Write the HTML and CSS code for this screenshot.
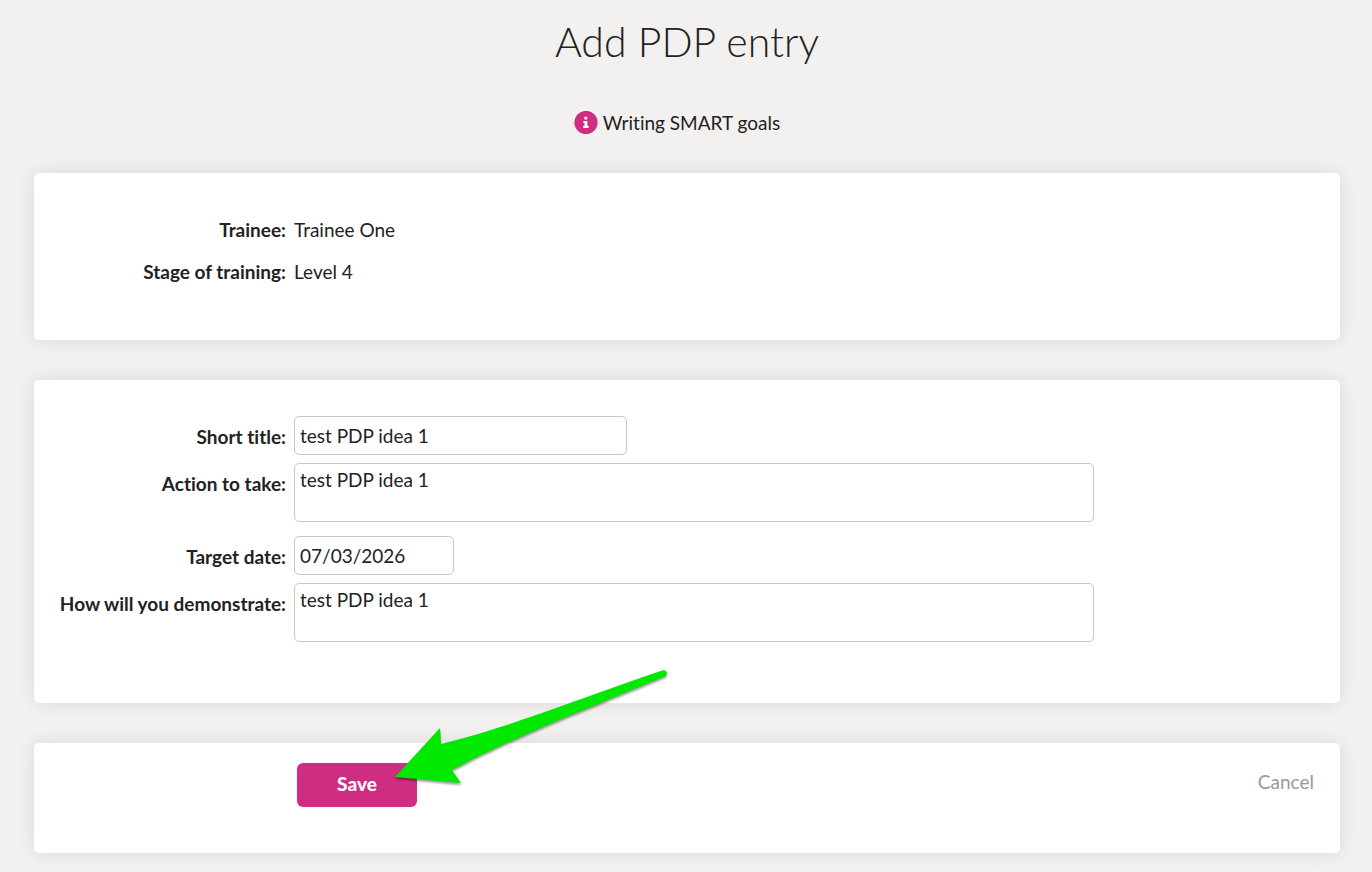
FILE: index.html
```html
<!DOCTYPE html>
<html lang="en">
<head>
<meta charset="utf-8">
<title>Add PDP entry</title>
<link rel="stylesheet" href="styles.css">
</head>
<body>
<main class="page">
  <h1 class="title">Add PDP entry</h1>
  <a class="help" href="#smart">
    <svg class="help-icon" viewBox="0 0 24 24" aria-hidden="true">
      <circle cx="12" cy="11.5" r="11.6" fill="#cf2d82"/>
      <path fill="#fff" d="M10.4 5.800h2.800v2.600h-2.800zM9.400 9.900h3.900v4.900h1.300v2.200H9.200v-2.200h1.300v-2.800H9.400z"/>
    </svg>
    <span>Writing SMART goals</span>
  </a>

  <form class="form">
    <section class="card">
      <dl class="details">
        <dt class="label">Trainee:</dt>
        <dd class="value">Trainee One</dd>
        <dt class="label">Stage of training:</dt>
        <dd class="value">Level 4</dd>
      </dl>
    </section>

    <section class="card fields">
      <div class="row">
        <label class="label" for="short-title">Short title:</label>
        <input class="control medium" id="short-title" type="text" value="test PDP idea 1">
      </div>
      <div class="row">
        <label class="label" for="action">Action to take:</label>
        <textarea class="control area" id="action">test PDP idea 1</textarea>
      </div>
      <div class="row spaced">
        <label class="label" for="target-date">Target date:</label>
        <input class="control short" id="target-date" type="text" value="07/03/2026">
      </div>
      <div class="row">
        <label class="label" for="demonstrate">How will you demonstrate:</label>
        <textarea class="control area" id="demonstrate">test PDP idea 1</textarea>
      </div>
    </section>

    <section class="card actions">
      <div class="save-wrap">
        <button class="save" type="button">Save</button>
        <svg class="arrow" viewBox="0 0 290 130" aria-hidden="true">
          <path fill="#00e800" d="M8 114 53 65 54 81C118 66 196 34 276 7.300Q279 7 280 9.500Q280 12 278 13.200C202 45 130 72 65 107L74 120Z"/>
        </svg>
      </div>
      <a class="cancel" href="#cancel">Cancel</a>
    </section>
  </form>
</main>
</body>
</html>
```
FILE: styles.css
```css
* {
  box-sizing: border-box;
}

body {
  margin: 0;
  background: #f3f1ef;
  color: #222;
  font-family: Lato, "Liberation Sans", sans-serif;
  font-size: 19px;
  line-height: 26px;
  font-variant-ligatures: none;
}

.page {
  display: flex;
  flex-direction: column;
  align-items: center;
  padding: 16px 32px 19px 34px;
}

.title {
  margin: 0;
  font-size: 41px;
  line-height: 52px;
  font-weight: 300;
}

.help {
  display: flex;
  align-items: center;
  gap: 5px;
  margin: 42px 0 37px;
  padding-right: 20px;
  color: inherit;
  text-decoration: none;
}

.help-icon {
  width: 24px;
  height: 24px;
}

.form {
  display: flex;
  flex-direction: column;
  gap: 40px;
  width: 100%;
}

.card {
  background: #fff;
  border-radius: 5px;
  box-shadow: 0 0 18px rgba(0, 0, 0, 0.1);
}

.details {
  display: grid;
  grid-template-columns: 252px 1fr;
  gap: 16px 8px;
  margin: 0;
  padding: 44px 20px 55px 0;
}

.label {
  font-weight: 700;
  text-align: right;
  white-space: nowrap;
}

.value {
  margin: 0;
}

.fields {
  display: flex;
  flex-direction: column;
  gap: 8px;
  padding: 36px 20px 61px 0;
}

.row {
  display: grid;
  grid-template-columns: 252px 1fr;
  gap: 8px;
}

.row .label {
  padding-top: 8px;
}

.spaced {
  margin-top: 6px;
}

.control {
  display: block;
  width: 100%;
  height: 39px;
  padding: 0 5px;
  border: 1px solid #c8c8c8;
  border-radius: 5px;
  background: #fff;
  color: inherit;
  font: inherit;
  font-variant-ligatures: none;
}

.medium {
  max-width: 333px;
}

.short {
  max-width: 160px;
}

.area {
  max-width: 800px;
  height: 59px;
  padding-top: 3px;
  resize: none;
}

.actions {
  display: flex;
  align-items: flex-start;
  justify-content: space-between;
  padding: 20px 26px 46px 263px;
}

.save-wrap {
  position: relative;
}

.save {
  display: block;
  width: 120px;
  height: 44px;
  padding: 0 0 2px;
  border: 0;
  border-radius: 6px;
  background: #cf2d82;
  color: #fff;
  font: inherit;
  font-weight: 900;
}

.arrow {
  position: absolute;
  left: 90px;
  top: -100px;
  width: 290px;
  height: 130px;
  pointer-events: none;
  filter: drop-shadow(0 2px 1px rgba(0, 0, 0, 0.4));
}

.cancel {
  padding-top: 6px;
  color: #999;
  text-decoration: none;
}
```
